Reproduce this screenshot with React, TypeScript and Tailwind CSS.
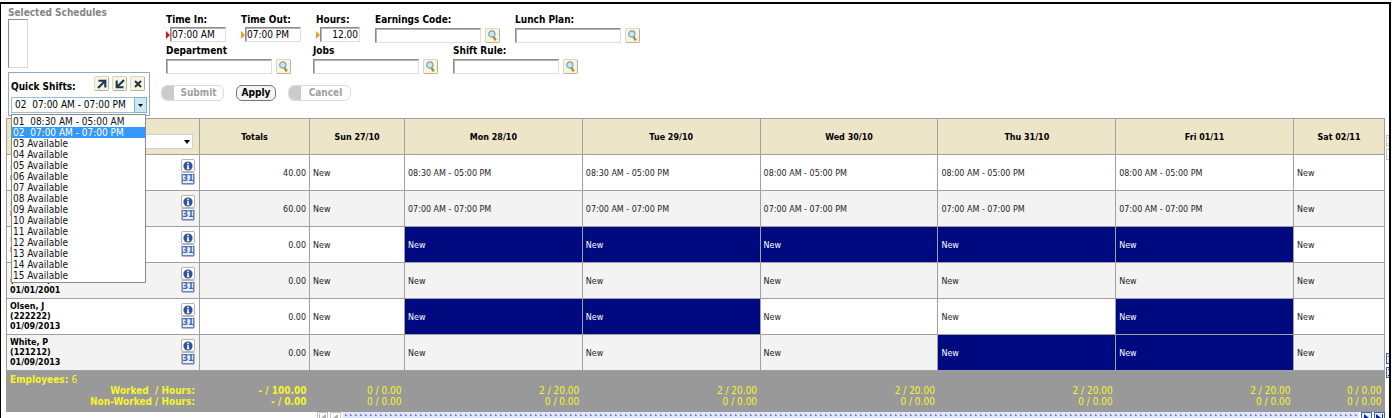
import React from "react";

const days = ["Sun 27/10", "Mon 28/10", "Tue 29/10", "Wed 30/10", "Thu 31/10", "Fri 01/11", "Sat 02/11"];
const dayTotals = ["0 / 0.00", "2 / 20.00", "2 / 20.00", "2 / 20.00", "2 / 20.00", "2 / 20.00", "0 / 0.00"];
const shift = (text: string) => ["New", text, text, text, text, text, "New"];
const empty = shift("New");

type Row = { person: string[]; total: string; cells: string[]; picked: number[] };

const rows: Row[] = [
  { person: [], total: "40.00", cells: ["New", "08:30 AM - 05:00 PM", "08:30 AM - 05:00 PM", "08:00 AM - 05:00 PM", "08:00 AM - 05:00 PM", "08:00 AM - 05:00 PM", "New"], picked: [] },
  { person: [], total: "60.00", cells: shift("07:00 AM - 07:00 PM"), picked: [] },
  { person: [], total: "0.00", cells: empty, picked: [1, 2, 3, 4, 5] },
  { person: ["\u00a0", "(000000)", "01/01/2001"], total: "0.00", cells: empty, picked: [] },
  { person: ["Olsen, J", "(222222)", "01/09/2013"], total: "0.00", cells: empty, picked: [1, 2, 5] },
  { person: ["White, P", "(121212)", "01/09/2013"], total: "0.00", cells: empty, picked: [4, 5] },
];

const quickShifts = [
  "01  08:30 AM - 05:00 AM",
  "02  07:00 AM - 07:00 PM",
  ...["03", "04", "05", "06", "07", "08", "09", "10", "11", "12", "13", "14", "15"].map((n) => `${n} Available`),
];

const inputStyle = "h-[15px] border border-[#dedede] border-t-[#8c8c8c] border-l-[#8c8c8c] bg-white px-px text-[10px] leading-3 shadow-[inset_1px_1px_0_#b4b4b4] outline-none";
const toolStyle = "flex size-[15px] items-center justify-center rounded-xs border border-[#b3b1a2] border-t-[#d8d6c6] border-l-[#d8d6c6] bg-[#f8f5dd]";

function Lookup({ label }: { label: string }) {
  return (
    <button type="button" aria-label={label} className={toolStyle}>
      <svg viewBox="0 0 13 13" className="size-[13px]" fill="none">
        <path d="M7.6 7.8 9.8 11.4" stroke="#c0862a" strokeWidth="2.4" />
        <circle cx="5.8" cy="5" r="3.1" fill="#bfe9f7" stroke="#7f9eae" strokeWidth="1.2" />
      </svg>
    </button>
  );
}

function LookupField({ label, id, wide }: { label: string; id: string; wide?: boolean }) {
  return (
    <div className={wide ? "w-[147px]" : "w-[140px]"}>
      <label htmlFor={id} className="block font-bold">{label}</label>
      <div className="mt-[2px] flex items-center gap-1">
        <input id={id} className={`${inputStyle} w-[106px]`} />
        <Lookup label={`Find ${label}`} />
      </div>
    </div>
  );
}

function TimeField({ label, id, value, arrow, short }: { label: string; id: string; value: string; arrow: string; short?: boolean }) {
  return (
    <div className={short ? "w-[59px]" : "w-[75px]"}>
      <label htmlFor={id} className="block font-bold">{label}</label>
      <div className="mt-px flex items-center">
        <svg viewBox="0 0 4 8" className="h-2 w-1"><path d="M0 0 4 4 0 8Z" fill={arrow} /></svg>
        <input id={id} defaultValue={value} className={short ? `${inputStyle} w-10 text-right` : `${inputStyle} w-14`} />
      </div>
    </div>
  );
}

const toolIcons: [string, React.ReactNode][] = [
  ["Open", <path key="a" d="M2 10 8 4M2.5 2.7H9.3V9.5" />],
  ["Collapse", <path key="b" d="M10 2 4 8M2.7 2.5V9.3H9.5" />],
  ["Remove", <path key="c" d="M3 3 9 9M9 3 3 9" />],
];

function QuickShifts() {
  return (
    <section className="relative mt-1 h-[44px] w-[142px] border border-[#8fa9c9] bg-white px-[2px]">
      <div className="flex h-6 items-start justify-between pt-[3px] pr-[2px]">
        <label htmlFor="quick" className="pt-[5px] font-bold">Quick Shifts:</label>
        <div className="flex gap-[3px]">
          {toolIcons.map(([name, icon]) => (
            <button key={name} type="button" aria-label={name} className={toolStyle}>
              <svg viewBox="0 0 12 12" className="size-3" fill="none" stroke="#1d3557" strokeWidth="2.1">{icon}</svg>
            </button>
          ))}
        </div>
      </div>
      <div className="relative flex">
        <select id="quick" defaultValue={quickShifts[1]} className="h-4 w-[136px] appearance-none border border-[#9dbbd4] bg-white pl-[3px] text-[10px] whitespace-pre outline-none">
          {quickShifts.map((s) => <option key={s} value={s}>{s.replace("  ", "\u00a0\u00a0")}</option>)}
        </select>
        <span className="pointer-events-none absolute top-0 left-[123px] flex h-4 w-[13px] items-center justify-center border border-[#7fb2d2] bg-[#cfe8f6]">
          <svg viewBox="0 0 5 3" className="h-[3px] w-[5px]"><path d="M0 0H5L2.5 3Z" /></svg>
        </span>
      </div>
      <ul role="listbox" className="absolute top-[41px] left-[2px] z-10 w-[135px] border border-[#8c8c8c] bg-white pt-px pb-px text-[10px] leading-[11px] whitespace-pre">
        {quickShifts.map((s, i) => (
          <li key={s} role="option" aria-selected={i === 1} className={i === 1 ? "bg-[#3399ff] px-px text-white" : "px-px text-[#111]"}>{s}</li>
        ))}
      </ul>
    </section>
  );
}

function RowIcons() {
  return (
    <div className="flex flex-col pb-px">
      <button type="button" aria-label="Details" className="flex h-[13px] w-[14px] items-center justify-center rounded-xs border border-[#b5b5b5] bg-white">
        <svg viewBox="0 0 10 10" className="size-[10px]">
          <circle cx="5" cy="5" r="4.6" fill="#2b5597" />
          <path d="M3.9 4.2H5.9V7.3H6.5V8.2H3.7V7.3H4.3V5H3.9Z M4.2 1.7H5.9V3.3H4.2Z" fill="#fff" />
        </svg>
      </button>
      <button type="button" aria-label="Calendar" className="flex h-[13px] w-[14px] items-center justify-center rounded-xs border border-[#b5b5b5] bg-white">
        <span className="flex h-[10px] w-3 items-center justify-center border border-[#6b8ac0] bg-[#e6edf8] text-[8px] leading-none font-bold text-[#3f68ad]">31</span>
      </button>
    </div>
  );
}

function Pager({ d, off, label }: { d: string; off?: boolean; label: string }) {
  return (
    <button type="button" aria-label={label} className={off ? "size-[11px] shrink-0 border border-[#c4c4c4] bg-white text-[#b0b0b0]" : "size-[11px] shrink-0 border border-[#3d62b0] bg-[#e4ecff] text-[#0c2a86]"}>
      <svg viewBox="0 0 9 9" className="size-[9px]" fill="currentColor"><path d={d} /></svg>
    </button>
  );
}

const line = "border border-[#a0a0a0]";
const cell = "border border-[#a0a0a0] pt-[2px] pb-0";

export default function App() {
  return (
    <div className="pt-[2px] pr-px font-['DejaVu_Sans_Condensed','DejaVu_Sans',sans-serif] text-[10px] leading-3 text-black">
      <main className="h-[416px] overflow-hidden border-t-2 border-r-2 border-l border-black pl-[5px]">
        <header className="flex h-[114px] gap-[10px]">
          <div className="w-[145px] shrink-0 pt-[3px] pl-[2px]">
            <h2 className="font-bold text-[#858585]">Selected Schedules</h2>
            <div className="h-[49px] w-5 border border-[#d8d8d8] border-t-[#8c8c8c] border-l-[#8c8c8c]" />
            <QuickShifts />
          </div>
          <form className="pt-[10px]">
            <div className="flex pl-[5px]">
              <TimeField id="in" label="Time In:" value="07:00 AM" arrow="#e01020" />
              <TimeField id="out" label="Time Out:" value="07:00 PM" arrow="#f09a28" />
              <TimeField id="hours" label="Hours:" value="12.00" arrow="#f09a28" short />
              <LookupField id="earn" label="Earnings Code:" />
              <LookupField id="lunch" label="Lunch Plan:" />
            </div>
            <div className="mt-[2px] flex pl-[5px]">
              <LookupField id="dept" label="Department" wide />
              <LookupField id="jobs" label="Jobs" />
              <LookupField id="rule" label="Shift Rule:" />
            </div>
            <div className="mt-[11px] flex gap-3">
              <button type="button" disabled className="flex h-4 w-[63px] items-center overflow-hidden rounded-md border border-[#dcdcdc] font-bold text-[#a0a0a0]">
                <span className="h-full w-3 bg-[#cbcbcb]" /><span className="grow">Submit</span>
              </button>
              <button type="button" className="h-4 w-10 rounded-md border border-[#777] bg-[#f4f4f4] font-bold">Apply</button>
              <button type="button" disabled className="flex h-4 w-[63px] items-center overflow-hidden rounded-md border border-[#dcdcdc] font-bold text-[#a0a0a0]">
                <span className="h-full w-3 bg-[#cbcbcb]" /><span className="grow">Cancel</span>
              </button>
            </div>
          </form>
        </header>

        <div className="flex gap-px">
          <div className="min-w-0 grow">
            <table className="w-full table-fixed border-collapse font-['DejaVu_Sans',sans-serif] text-[8px] leading-[10px]">
              <colgroup>
                <col className="w-[193px]" /><col className="w-[110px]" /><col className="w-[95px]" />
                <col /><col /><col /><col /><col />
                <col className="w-[91px]" />
              </colgroup>
              <thead>
                <tr className="h-9 bg-[#ede5c8]">
                  <th className={`${line} p-0`}>
                    <div className="flex justify-end pt-[10px] pr-[6px]">
                      <span className="relative flex w-[176px]">
                        <select aria-label="Employee filter" className="h-[15px] w-full appearance-none border border-[#d0d0d0] bg-white" />
                        <svg viewBox="0 0 6 4" className="pointer-events-none absolute top-[6px] right-[3px] h-1 w-[6px]"><path d="M0 0H6L3 4Z" /></svg>
                      </span>
                    </div>
                  </th>
                  <th className={cell}>Totals</th>
                  {days.map((d) => <th key={d} className={cell}>{d}</th>)}
                </tr>
              </thead>
              <tbody className="text-[#1c1c1c]">
                {rows.map((r, i) => (
                  <tr key={i} className={i % 2 ? "h-9 bg-[#f3f3f3]" : "h-9 bg-white"}>
                    <th scope="row" className={`${line} py-0 pr-1 pl-[3px] text-left text-black`}>
                      <div className="flex items-center justify-between">
                        {r.person.length ? (
                          <div>{r.person.map((p, k) => <div key={k}>{p}</div>)}</div>
                        ) : (
                          <div className="flex flex-col gap-[5px]"><i className="h-[5px] w-px bg-[#f3cf9c]" /><i className="h-[5px] w-px bg-[#e9a44c]" /></div>
                        )}
                        <RowIcons />
                      </div>
                    </th>
                    <td className={`${cell} pr-[3px] text-right`}>{r.total}</td>
                    {r.cells.map((c, j) => (
                      <td key={j} className={r.picked.includes(j) ? `${cell} bg-[#000a80] pl-[3px] text-white` : `${cell} pl-[3px]`}>{c}</td>
                    ))}
                  </tr>
                ))}
              </tbody>
              <tfoot className="font-['DejaVu_Sans_Condensed','DejaVu_Sans',sans-serif]">
                <tr className="h-[41px] bg-[#999] text-right align-top text-[10px] leading-[11px] text-[#f5f52a]">
                  <th scope="row" className="border border-[#999] pt-[3px] pr-1 pb-0 pl-[3px]">
                    <div className="text-left">Employees: <span className="font-normal">6</span></div>
                    <div className="whitespace-pre">Worked  / Hours:</div>
                    <div>Non-Worked / Hours:</div>
                  </th>
                  <td className="pt-[14px] pr-[3px] font-bold"><div>- / 100.00</div><div>- / 0.00</div></td>
                  {dayTotals.map((t, i) => <td key={i} className="pt-[14px] pr-[3px]"><div>{t}</div><div>0 / 0.00</div></td>)}
                </tr>
              </tfoot>
            </table>
            <nav className="flex gap-[2px] pl-[311px]">
              <Pager off label="First" d="M1 1H2V8H1Z M8 1V8L3 5Z" />
              <Pager off label="Previous" d="M7 1V8L2 5Z" />
              <div className="h-[11px] grow bg-[#dfe5fb] bg-[radial-gradient(circle,#7b7be8_1px,transparent_1px)] bg-[size:5px_7px]" />
              <Pager label="Next" d="M2 1V8L7 5Z" />
              <Pager label="Last" d="M1 1V8L6 5Z M7 1H8V8H7Z" />
            </nav>
          </div>
          <div className="flex w-[3px] shrink-0 flex-col justify-between overflow-hidden pt-[17px] pb-[45px]">
            <div className="flex flex-col gap-[3px]">
              <Pager off label="Top" d="M1 1H8V2H1Z M1 8H8L5 3Z" />
              <Pager off label="Up" d="M1 7H8L5 2Z" />
            </div>
            <div className="flex flex-col gap-[3px]">
              <Pager label="Down" d="M1 2H8L5 7Z" />
              <Pager label="Bottom" d="M1 1H8L5 6Z M1 7H8V8H1Z" />
            </div>
          </div>
        </div>
      </main>
    </div>
  );
}
